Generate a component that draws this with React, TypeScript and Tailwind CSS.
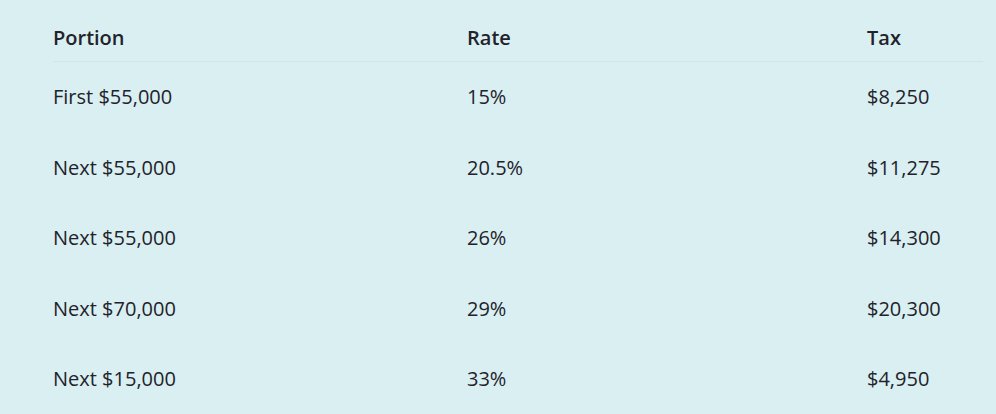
import React from "react";

const rows = [
  ["First $55,000", "15%", "$8,250"],
  ["Next $55,000", "20.5%", "$11,275"],
  ["Next $55,000", "26%", "$14,300"],
  ["Next $70,000", "29%", "$20,300"],
  ["Next $15,000", "33%", "$4,950"],
];

export default function App() {
  return (
    <div
      className="w-[996px] h-[414px] bg-[#d9eff1] text-[#23222b] text-[20px] leading-[28px] overflow-hidden"
      style={{ fontFamily: '"Open Sans", "Noto Sans", sans-serif' }}
    >
      <div className="pl-[53px] pr-[13px]">
        <div className="grid grid-cols-[414px_400px_1fr] h-[62px] pt-[24px] border-b border-[#d0e7e9] font-semibold">
          <div>Portion</div>
          <div>Rate</div>
          <div>Tax</div>
        </div>
        {rows.map((r, i) => (
          <div key={i} className="grid grid-cols-[414px_400px_1fr] h-[70.5px] items-center">
            <div>{r[0]}</div>
            <div>{r[1]}</div>
            <div>{r[2]}</div>
          </div>
        ))}
      </div>
    </div>
  );
}
